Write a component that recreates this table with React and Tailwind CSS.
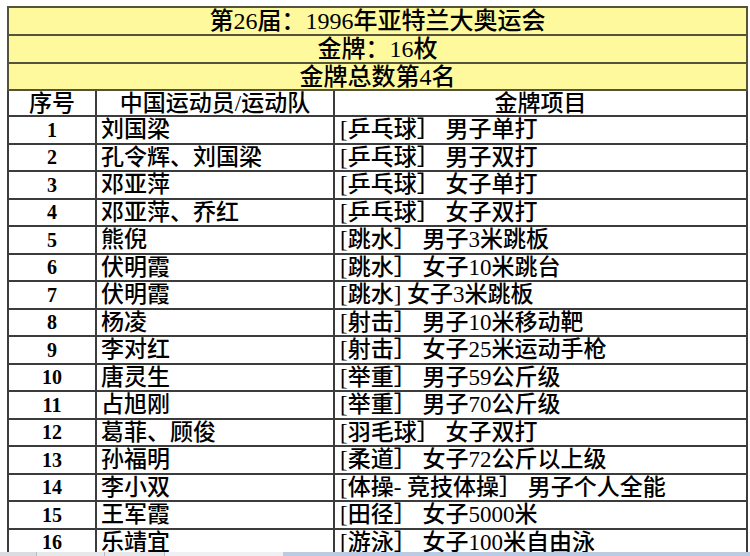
import React from 'react';

const medals = [
  ['1', '刘国梁', '[乒乓球］ 男子单打'],
  ['2', '孔令辉、刘国梁', '[乒乓球］ 男子双打'],
  ['3', '邓亚萍', '[乒乓球］ 女子单打'],
  ['4', '邓亚萍、乔红', '[乒乓球］ 女子双打'],
  ['5', '熊倪', '[跳水］ 男子3米跳板'],
  ['6', '伏明霞', '[跳水］ 女子10米跳台'],
  ['7', '伏明霞', '[跳水] 女子3米跳板'],
  ['8', '杨凌', '[射击］ 男子10米移动靶'],
  ['9', '李对红', '[射击］ 女子25米运动手枪'],
  ['10', '唐灵生', '[举重］ 男子59公斤级'],
  ['11', '占旭刚', '[举重］ 男子70公斤级'],
  ['12', '葛菲、顾俊', '[羽毛球］ 女子双打'],
  ['13', '孙福明', '[柔道］ 女子72公斤以上级'],
  ['14', '李小双', '[体操- 竞技体操］ 男子个人全能'],
  ['15', '王军霞', '[田径］ 女子5000米'],
  ['16', '乐靖宜', '[游泳］ 女子100米自由泳'],
];

const font = { fontFamily: '"Liberation Serif", "Noto Sans CJK SC", serif' };

export default function App() {
  return (
    <div className="relative w-[750px] h-[556px] overflow-hidden bg-white text-black" style={font}>
      <div className="pl-[7px] pt-[6px]">
        <table className="w-[739px] border-collapse table-fixed text-[23px] leading-none font-medium">
          <colgroup>
            <col className="w-[88px]" />
            <col className="w-[238px]" />
            <col className="w-[413px]" />
          </colgroup>
          <tbody>
            {/* Title rows */}
            <tr className="h-[28px] bg-[#fdf99c] text-[24px]">
              <td colSpan={3} className="border-2 border-[#55533a] text-center">第26届：1996年亚特兰大奥运会</td>
            </tr>
            <tr className="h-[28px] bg-[#fdf99c] text-[24px]">
              <td colSpan={3} className="border-2 border-[#55533a] text-center">金牌：16枚</td>
            </tr>
            <tr className="h-[27px] bg-[#fdf99c] text-[24px]">
              <td colSpan={3} className="border-2 border-[#55533a] text-center">金牌总数第4名</td>
            </tr>
            {/* Header */}
            <tr className="h-[26px]">
              <td className="border-2 border-[#3c3c3c] text-center">序号</td>
              <td className="border-2 border-[#3c3c3c] text-center">中国运动员/运动队</td>
              <td className="border-2 border-[#3c3c3c] text-center">金牌项目</td>
            </tr>
            {medals.map(([no, name, event]) => (
              <tr key={no} className="h-[27.5px]">
                <td className="border-2 border-[#3c3c3c] text-center text-[20px] font-bold">{no}</td>
                <td className="border-2 border-[#3c3c3c] pl-[4px] whitespace-nowrap">{name}</td>
                <td className="border-2 border-[#3c3c3c] pl-[5px] whitespace-nowrap">{event}</td>
              </tr>
            ))}
          </tbody>
        </table>
      </div>
      {/* sheet tab strip */}
      <div className="absolute left-0 right-0 bottom-0 h-[4px] flex">
        <div className="w-[37px] bg-[#d9dde3] border-r border-[#b8bcc4]" />
        <div className="w-[68px] bg-[#e6e8ec] border-r border-[#b8bcc4]" />
        <div className="w-[60px] bg-[#e6e8ec] border-r border-[#b8bcc4]" />
        <div className="w-[118px] bg-[#eef0f3]" />
        <div className="flex-1 bg-[#b9cce4]" />
      </div>
    </div>
  );
}
